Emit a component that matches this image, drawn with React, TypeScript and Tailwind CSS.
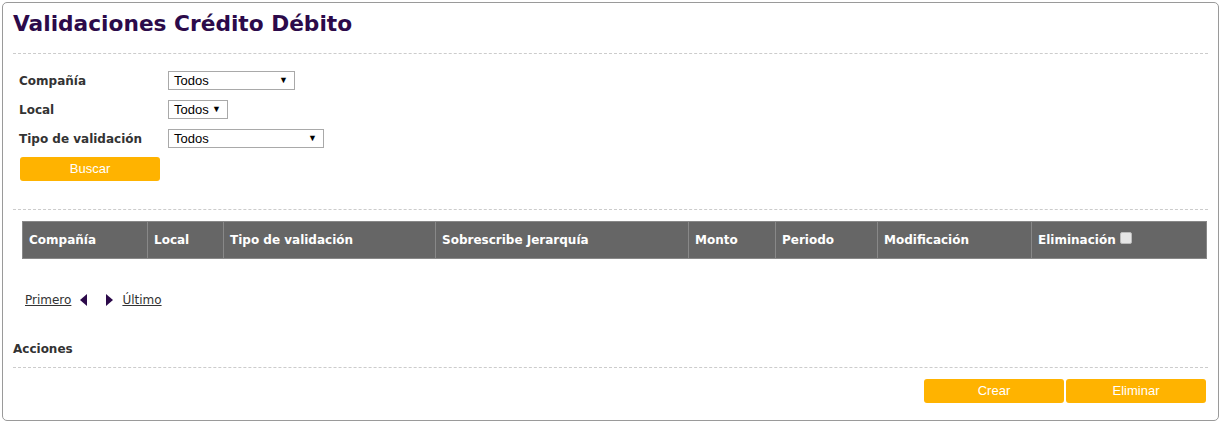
import React from "react";

const verd = { fontFamily: '"DejaVu Sans", Verdana, sans-serif' };
const arial = { fontFamily: '"Liberation Sans", Arial, sans-serif' };

function Sel({ w }: { w: string }) {
  return (
    <div
      className={`${w} h-[19px] border border-[#a9a9a9] bg-white flex items-center justify-between pl-[5px] pr-[6px] text-[13px] font-normal text-black`}
      style={arial}
    >
      <span className="leading-none">Todos</span>
      <span className="text-[9px] leading-none">▼</span>
    </div>
  );
}

function Btn({ label }: { label: string }) {
  return (
    <div
      className="w-[140px] h-[24px] rounded-[3px] bg-[#ffb300] text-white text-[13px] flex items-center justify-center"
      style={arial}
    >
      {label}
    </div>
  );
}

const cols: [string, string][] = [
  ["Compañía", "w-[125px]"],
  ["Local", "w-[76px]"],
  ["Tipo de validación", "w-[212px]"],
  ["Sobrescribe Jerarquía", "w-[253px]"],
  ["Monto", "w-[87px]"],
  ["Periodo", "w-[102px]"],
  ["Modificación", "w-[154px]"],
];

export default function App() {
  return (
    <div className="w-[1221px] h-[423px] bg-white pt-[2px] pl-[2px]">
      <div className="w-[1217px] h-[419px] border border-[#9a9a9a] rounded-[5px] px-[10px]" style={verd}>
        <div className="h-[28px] mt-[7px] text-[21.7px] leading-[28px] font-bold text-[#2c0a4a]">
          Validaciones Crédito Débito
        </div>
        <div className="mt-[15px] border-t border-dashed border-[#cccccc]" />
        <div className="mt-[12px] text-[12px] font-bold text-[#333333]">
          <div className="h-[29px] flex items-center pl-[6px]">
            <div className="w-[149px]">Compañía</div>
            <Sel w="w-[127px]" />
          </div>
          <div className="h-[29px] flex items-center pl-[6px]">
            <div className="w-[149px]">Local</div>
            <Sel w="w-[60px]" />
          </div>
          <div className="h-[29px] flex items-center pl-[6px]">
            <div className="w-[149px]">Tipo de validación</div>
            <Sel w="w-[156px]" />
          </div>
        </div>
        <div className="mt-[4px] ml-[7px]">
          <Btn label="Buscar" />
        </div>
        <div className="mt-[28px] border-t border-dashed border-[#cccccc]" />
        <div className="mt-[11px] ml-[9px] mr-[1px] flex h-[38px] bg-[#666666] border border-[#888888] text-white text-[12px] font-bold">
          {cols.map(([c, w]) => (
            <div key={c} className={`${w} border-r border-[#888888] flex items-center pl-[6px]`}>
              {c}
            </div>
          ))}
          <div className="flex-1 flex items-center pl-[6px] gap-[4px]">
            <span>Eliminación</span>
            <span className="w-[12px] h-[12px] bg-[#e6e6e6] border border-[#bbbbbb] rounded-[2px] -mt-[4px]" />
          </div>
        </div>
        <div className="mt-[33px] ml-[12px] flex items-center text-[12px] text-[#333333] h-[16px]">
          <span className="underline">Primero</span>
          <svg width="8" height="12" viewBox="0 0 8 12" className="ml-[9px]">
            <polygon points="7,0 7,12 0,6" fill="#2c0a4a" />
          </svg>
          <svg width="8" height="12" viewBox="0 0 8 12" className="ml-[18px]">
            <polygon points="0,0 0,12 7,6" fill="#2c0a4a" />
          </svg>
          <span className="underline ml-[8px]">Último</span>
        </div>
        <div className="mt-[33px] text-[12px] font-bold text-[#333333] h-[16px] leading-[16px]">Acciones</div>
        <div className="mt-[10px] border-t border-dashed border-[#cccccc]" />
        <div className="mt-[11px] mr-[2px] flex justify-end gap-[2px]">
          <Btn label="Crear" />
          <Btn label="Eliminar" />
        </div>
      </div>
    </div>
  );
}
